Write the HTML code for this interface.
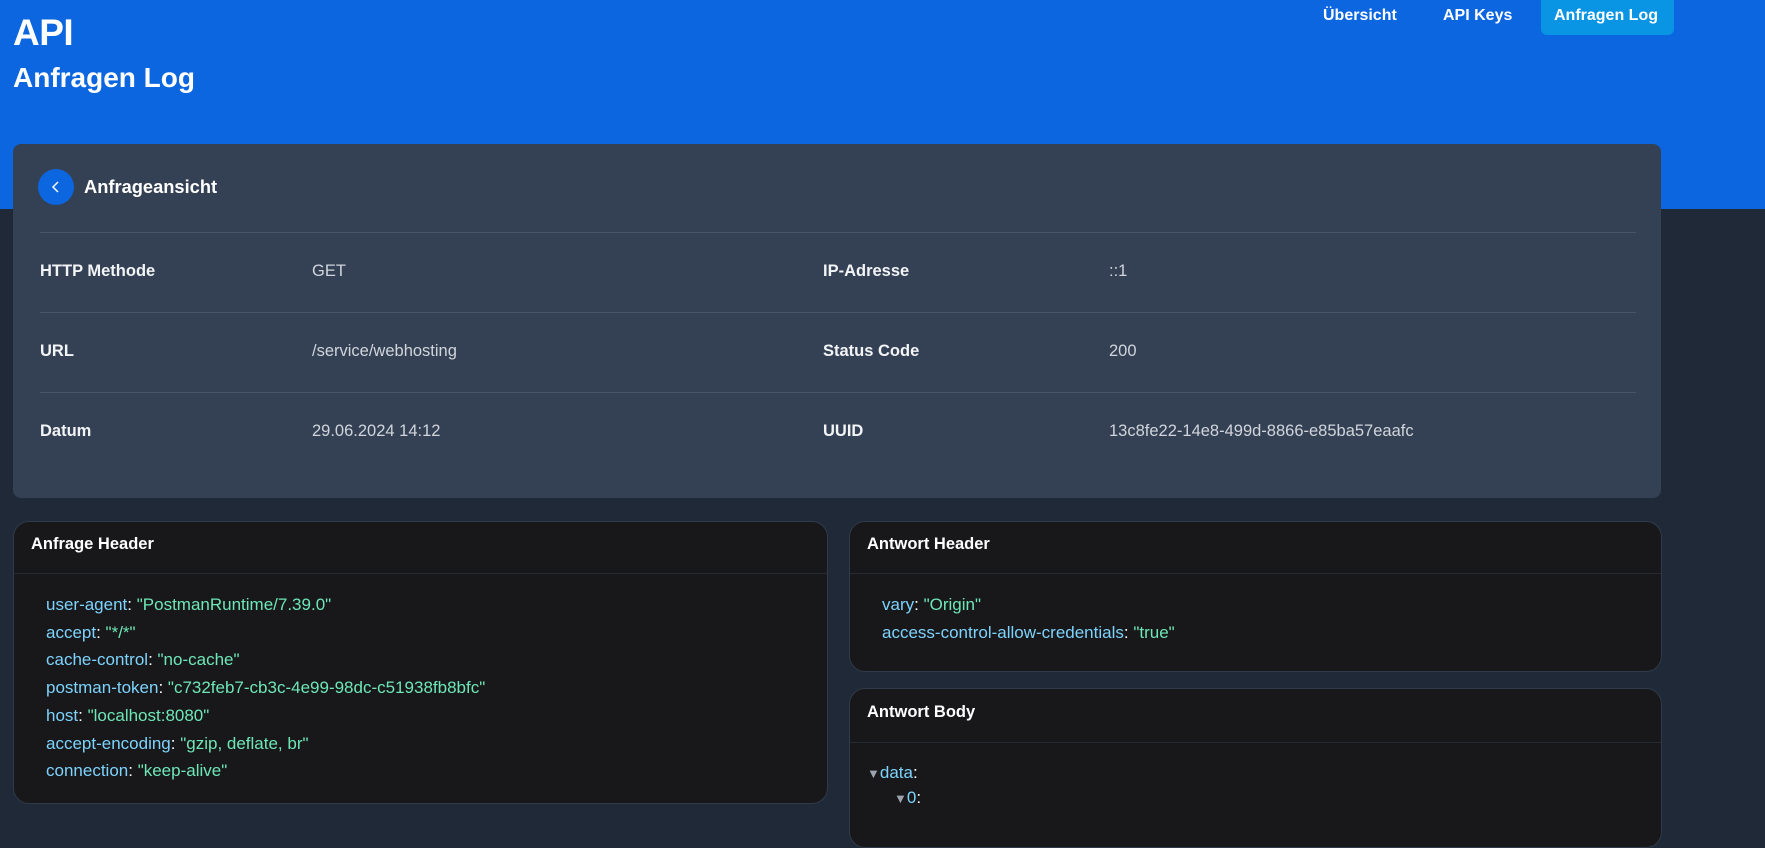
<!DOCTYPE html>
<html><head><meta charset="utf-8"><style>
*{margin:0;padding:0;box-sizing:border-box}
body{width:1765px;height:815px;overflow:hidden;background:#1f2937;font-family:"Liberation Sans",sans-serif;color:#fff;position:relative}
.hdr{position:absolute;left:0;top:0;width:1765px;height:209px;background:#0b66e0}
.abs{position:absolute;white-space:nowrap}
.t1{left:13px;top:12px;font-size:37px;font-weight:bold;letter-spacing:-0.5px}
.t2{left:13px;top:62px;font-size:28px;font-weight:bold}
.nav{top:7px;font-size:16px;font-weight:bold}
.btn{left:1541px;top:-6px;width:133px;height:41px;background:#0a94e4;border-radius:6px}
.panel{left:13px;top:144px;width:1648px;height:354px;background:#344154;border-radius:8px}
.circ{left:38px;top:169px;width:36px;height:36px;border-radius:50%;background:#0b66e0}
.line{height:1px;background:#4a5668;left:40px;width:1596px}
.row{font-size:16.5px}
.lab{font-weight:bold;color:#f3f4f6}
.val{color:#d1d5db}
.card{background:#18181b;border:1px solid #2f3a4a;border-radius:16px}
.ch{font-size:16.5px;font-weight:bold}
.cl{height:1px;background:#262a31}
.k{color:#7dd3fc}.s{color:#6ee7b7}
.code{font-size:17px;line-height:27.7px}
</style></head><body>
<div class="hdr"></div>
<div class="abs t1">API</div>
<div class="abs t2">Anfragen Log</div>
<div class="abs btn"></div>
<div class="abs nav" style="left:1323px">Übersicht</div>
<div class="abs nav" style="left:1443px">API Keys</div>
<div class="abs nav" style="left:1554px">Anfragen Log</div>

<div class="abs panel"></div>
<div class="abs circ"><svg width="36" height="36" viewBox="0 0 36 36"><path d="M20 13l-5 5 5 5" stroke="#fff" stroke-width="1.5" fill="none"/></svg></div>
<div class="abs" style="left:84px;top:176px;font-size:18.3px;font-weight:bold">Anfrageansicht</div>
<div class="abs line" style="top:232px"></div>
<div class="abs line" style="top:312px"></div>
<div class="abs line" style="top:392px"></div>

<div class="abs row lab" style="left:40px;top:262px">HTTP Methode</div>
<div class="abs row val" style="left:312px;top:262px">GET</div>
<div class="abs row lab" style="left:823px;top:262px">IP-Adresse</div>
<div class="abs row val" style="left:1109px;top:262px">::1</div>
<div class="abs row lab" style="left:40px;top:342px">URL</div>
<div class="abs row val" style="left:312px;top:342px">/service/webhosting</div>
<div class="abs row lab" style="left:823px;top:342px">Status Code</div>
<div class="abs row val" style="left:1109px;top:342px">200</div>
<div class="abs row lab" style="left:40px;top:422px">Datum</div>
<div class="abs row val" style="left:312px;top:422px">29.06.2024 14:12</div>
<div class="abs row lab" style="left:823px;top:422px">UUID</div>
<div class="abs row val" style="left:1109px;top:422px">13c8fe22-14e8-499d-8866-e85ba57eaafc</div>

<div class="abs card" style="left:13px;top:521px;width:815px;height:283px"></div>
<div class="abs ch" style="left:31px;top:535px">Anfrage Header</div>
<div class="abs cl" style="left:14px;top:573px;width:813px"></div>
<div class="abs code" style="left:46px;top:591px">
<div><span class="k">user-agent</span>: <span class="s">"PostmanRuntime/7.39.0"</span></div>
<div><span class="k">accept</span>: <span class="s">"*/*"</span></div>
<div><span class="k">cache-control</span>: <span class="s">"no-cache"</span></div>
<div><span class="k">postman-token</span>: <span class="s">"c732feb7-cb3c-4e99-98dc-c51938fb8bfc"</span></div>
<div><span class="k">host</span>: <span class="s">"localhost:8080"</span></div>
<div><span class="k">accept-encoding</span>: <span class="s">"gzip, deflate, br"</span></div>
<div><span class="k">connection</span>: <span class="s">"keep-alive"</span></div>
</div>

<div class="abs card" style="left:849px;top:521px;width:813px;height:151px"></div>
<div class="abs ch" style="left:867px;top:535px">Antwort Header</div>
<div class="abs cl" style="left:850px;top:573px;width:811px"></div>
<div class="abs code" style="left:882px;top:591px">
<div><span class="k">vary</span>: <span class="s">"Origin"</span></div>
<div><span class="k">access-control-allow-credentials</span>: <span class="s">"true"</span></div>
</div>

<div class="abs card" style="left:849px;top:688px;width:813px;height:160px"></div>
<div class="abs ch" style="left:867px;top:703px">Antwort Body</div>
<div class="abs cl" style="left:850px;top:742px;width:811px"></div>
<div class="abs code" style="left:867px;top:759px"><span style="color:#9ca3af;font-size:13px">▼</span><span class="k">data</span>:</div>
<div class="abs code" style="left:894px;top:784px"><span style="color:#9ca3af;font-size:13px">▼</span><span class="k">0</span>:</div>
</body></html>
